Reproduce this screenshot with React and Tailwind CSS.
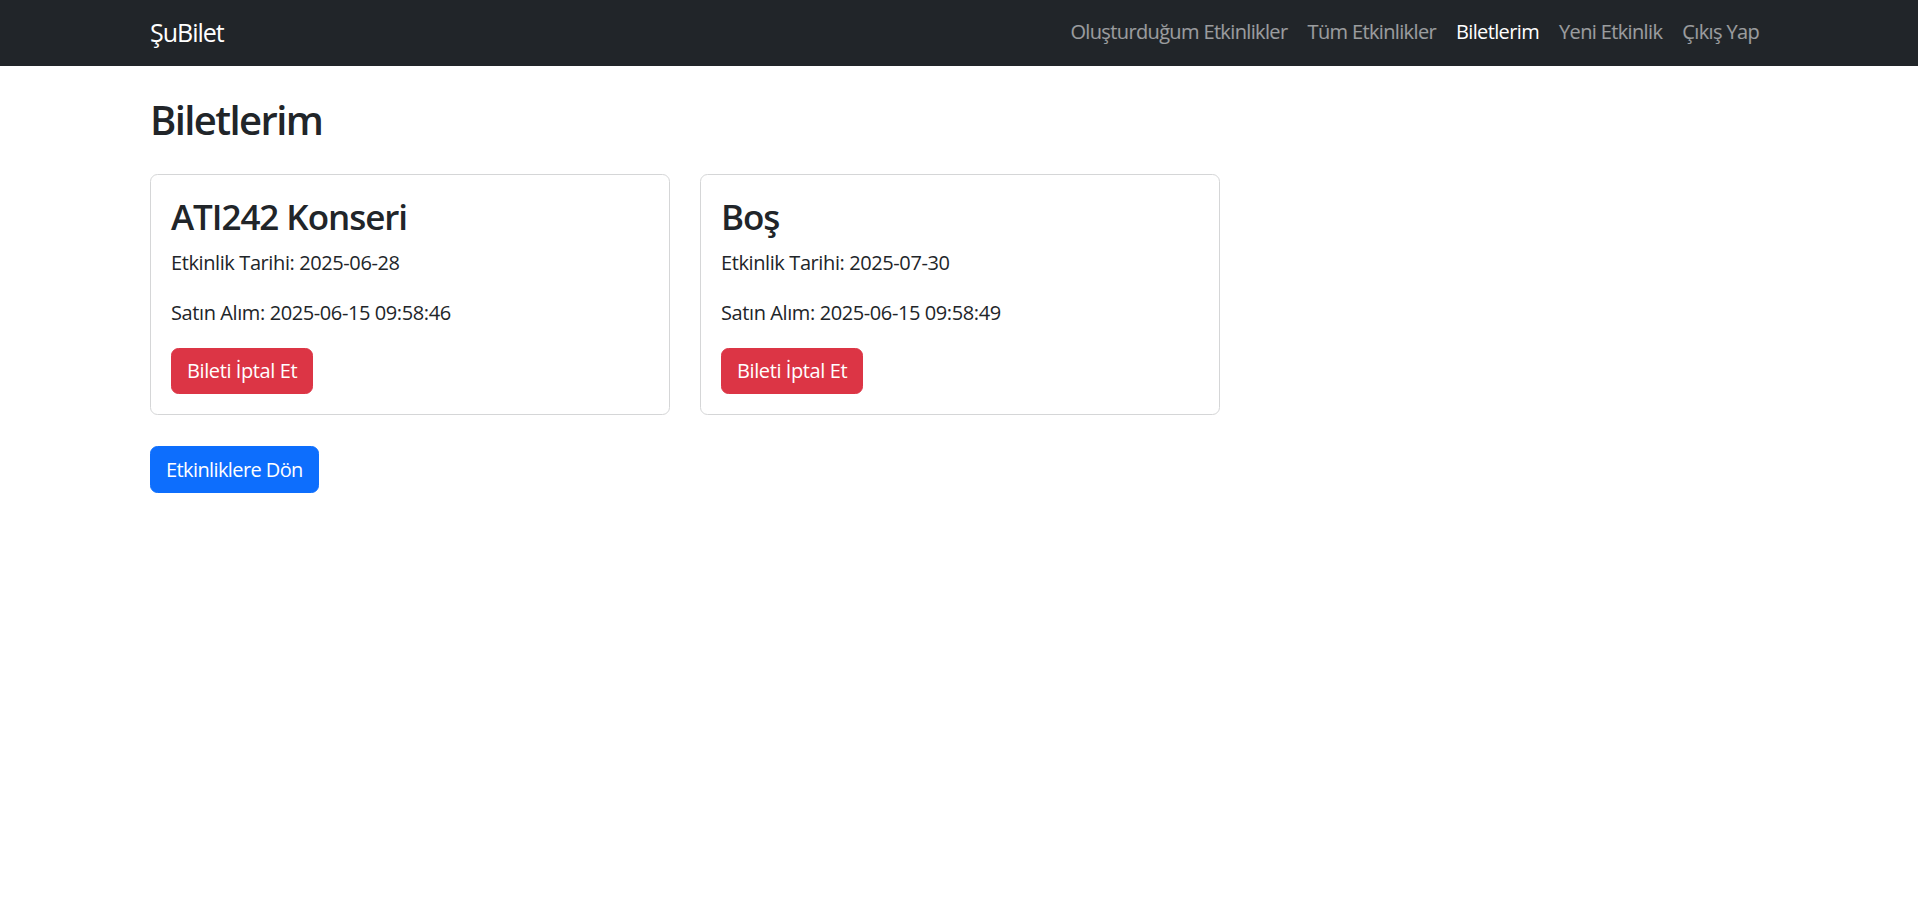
import React from 'react';

const tickets = [
  { id: 1, title: 'ATI242 Konseri', eventDate: '2025-06-28', boughtAt: '2025-06-15 09:58:46' },
  { id: 2, title: 'Boş', eventDate: '2025-07-30', boughtAt: '2025-06-15 09:58:49' }
];

const navLinks = [
  { label: 'Oluşturduğum Etkinlikler', active: false },
  { label: 'Tüm Etkinlikler', active: false },
  { label: 'Biletlerim', active: true },
  { label: 'Yeni Etkinlik', active: false },
  { label: 'Çıkış Yap', active: false }
];

const App = () => {
  return (
    <div className="min-h-screen bg-white text-[#212529] font-['Open_Sans','Noto_Sans',sans-serif] tracking-[-0.025em]">
      {/* Navbar */}
      <nav className="w-full h-[66px] bg-[#212529]">
        <div className="w-[1650px] mx-auto pl-[16px] pr-[15px] h-full pb-[2px] flex items-center justify-between">
          <span className="text-[25px] leading-[37px] tracking-[-0.04em] text-white">ŞuBilet</span>
          <div className="flex tracking-[-0.04em]">
            {navLinks.map((link) => (
              <span
                key={link.label}
                className={`px-[10px] text-[20px] leading-[30px] ${
                  link.active ? 'text-white' : 'text-white/55'
                }`}
              >
                {link.label}
              </span>
            ))}
          </div>
        </div>
      </nav>

      {/* Main Content */}
      <div className="w-[1650px] mx-auto px-[16px] pt-[30px]">
        <h2 className="text-[40px] leading-[48px] font-semibold tracking-[-0.04em] mb-[30px]">Biletlerim</h2>

        {/* Tickets */}
        <div className="flex gap-[30px]">
          {tickets.map((ticket) => (
            <div
              key={ticket.id}
              className="w-[520px] border border-[#d5d6d7] rounded-[7.5px] p-[20px]"
            >
              <h3 className="text-[35px] leading-[42px] font-semibold tracking-[-0.03em] mb-[10px] pt-px">{ticket.title}</h3>
              <p className="text-[20px] leading-[30px] mb-[20px]">Etkinlik Tarihi: {ticket.eventDate}</p>
              <p className="text-[20px] leading-[30px] mb-[20px]">Satın Alım: {ticket.boughtAt}</p>
              <button className="h-[46px] px-[15px] flex items-center border border-[#dc3545] bg-[#dc3545] text-white text-[20px] leading-[30px] rounded-[7.5px]">
                Bileti İptal Et
              </button>
            </div>
          ))}
        </div>

        {/* Back Button */}
        <button className="mt-[31px] h-[47px] px-[15px] flex items-center border border-[#0d6efd] bg-[#0d6efd] text-white text-[20px] leading-[30px] tracking-[-0.03em] rounded-[7.5px]">
          Etkinliklere Dön
        </button>
      </div>
    </div>
  );
};

export default App;
